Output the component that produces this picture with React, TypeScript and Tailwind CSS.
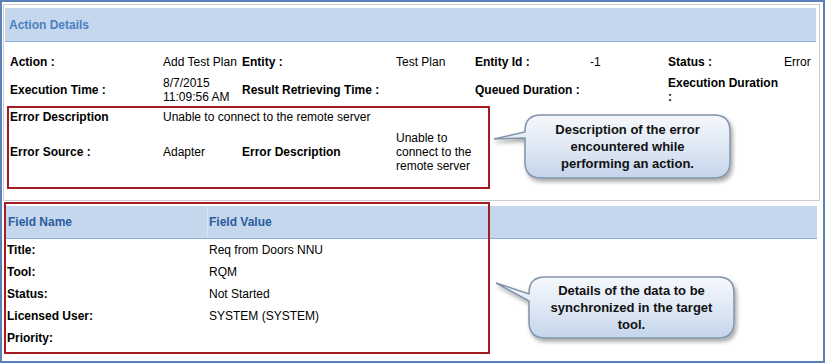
import React from 'react';

interface CalloutProps {
  left: number;
  top: number;
  width: number;
  height: number;
  bodyX: number;
  tipY: number;
  joinTop: number;
  joinBottom: number;
  lines: string[];
}

// speech bubble drawn as one svg path (body + tail), text laid over it
const Callout: React.FC<CalloutProps> = ({ left, top, width, height, bodyX, tipY, joinTop, joinBottom, lines }) => {
  const L = bodyX;
  const T = 5;
  const R = width - 8;
  const B = height - 8;
  const r = 16;
  const d = `M 4 ${tipY} L ${L} ${joinTop} L ${L} ${T + r} Q ${L} ${T} ${L + r} ${T} L ${R - r} ${T} Q ${R} ${T} ${R} ${T + r} L ${R} ${B - r} Q ${R} ${B} ${R - r} ${B} L ${L + r} ${B} Q ${L} ${B} ${L} ${B - r} L ${L} ${joinBottom} Z`;
  const id = `g${left}${top}`;
  return (
    <div className="absolute" style={{ left, top, width, height }}>
      <svg width={width} height={height} className="absolute left-0 top-0">
        <defs>
          <linearGradient id={id} x1="0" y1="0" x2="0" y2="1">
            <stop offset="0" stopColor="#f5f8fc" />
            <stop offset="0.55" stopColor="#dde7f4" />
            <stop offset="1" stopColor="#c3d4ea" />
          </linearGradient>
          <filter id={`${id}s`} x="-10%" y="-10%" width="130%" height="140%">
            <feDropShadow dx="2" dy="3" stdDeviation="2" floodColor="#000" floodOpacity="0.35" />
          </filter>
        </defs>
        <path d={d} fill={`url(#${id})`} stroke="#8394ab" strokeWidth="1.5" filter={`url(#${id}s)`} />
      </svg>
      <div
        className="absolute flex flex-col items-center justify-center text-center font-bold text-[13px] leading-[17px] text-[#111]"
        style={{ left: L, top: T, width: R - L, height: B - T }}
      >
        {lines.map(l => (
          <div key={l}>{l}</div>
        ))}
      </div>
    </div>
  );
};

const Label: React.FC<{ children: React.ReactNode }> = ({ children }) => (
  <div className="font-bold">{children}</div>
);

const App: React.FC = () => {
  const fields: [string, string][] = [
    ['Title:', 'Req from Doors NNU'],
    ['Tool:', 'RQM'],
    ['Status:', 'Not Started'],
    ['Licensed User:', 'SYSTEM (SYSTEM)'],
    ['Priority:', ''],
  ];

  return (
    <div
      className="relative w-[825px] h-[363px] overflow-hidden bg-white border-2 border-[#5a82b6] text-[12px] text-black"
      style={{ fontFamily: '"Liberation Sans", Arial, sans-serif' }}
    >
      {/* Action details panel */}
      <div className="mt-[2px] ml-[1px] w-[817px] h-[197px] border border-[#cdcdcd]">
        <div className="mt-[3px] ml-[1px] w-[811px] h-[34px] bg-[#c5d7ec] border-b border-[#8eaedb] flex items-center pl-[4px]">
          <span className="font-bold text-[#4d7fc4]">Action Details</span>
        </div>

        <div className="mt-[6px] pl-[6px] grid grid-cols-[153px_79px_154px_79px_115px_78px_116px_1fr] auto-rows-[28px] items-center leading-[14px]">
          <Label>Action :</Label>
          <div>Add Test Plan</div>
          <Label>Entity :</Label>
          <div>Test Plan</div>
          <Label>Entity Id :</Label>
          <div>-1</div>
          <Label>Status :</Label>
          <div>Error</div>

          <Label>Execution Time :</Label>
          <div>8/7/2015 11:09:56 AM</div>
          <Label>Result Retrieving Time :</Label>
          <div></div>
          <Label>Queued Duration :</Label>
          <div></div>
          <Label>Execution Duration :</Label>
          <div></div>
        </div>

        <div className="mt-[2px] ml-[3px] w-[483px] h-[83px] border-2 border-[#a51b22] pl-[1px] leading-[14px]">
          <div className="grid grid-cols-[153px_79px_154px_1fr] h-[18px] items-center">
            <Label>Error Description</Label>
            <div className="col-span-3">Unable to connect to the remote server</div>
          </div>
          <div className="mt-[5px] grid grid-cols-[153px_79px_154px_1fr] items-center">
            <Label>Error Source :</Label>
            <div>Adapter</div>
            <Label>Error Description</Label>
            <div className="w-[80px]">Unable to connect to the remote server</div>
          </div>
        </div>
      </div>

      {/* Field table */}
      <div className="mt-[5px] ml-[4px] w-[811px]">
        <div className="h-[33px] bg-[#c5d7ec] border-b border-[#8eaedb] flex font-bold text-[#2b5c9e]">
          <div className="w-[202px] pl-[2px] flex items-center border-r border-[#dbe5f2]">Field Name</div>
          <div className="pl-[1px] flex items-center">Field Value</div>
        </div>
        {fields.map(([name, value]) => (
          <div key={name} className="h-[22px] flex items-center">
            <div className="w-[203px] pl-[1px] font-bold">{name}</div>
            <div>{value}</div>
          </div>
        ))}
      </div>

      {/* annotation box over the table */}
      <div className="absolute left-[2px] top-[200px] w-[486px] h-[152px] border-2 border-[#a51b22]" />

      <Callout
        left={488}
        top={108}
        width={248}
        height={76}
        bodyX={35}
        tipY={29}
        joinTop={22}
        joinBottom={28}
        lines={['Description of the error', 'encountered while', 'performing an action.']}
      />
      <Callout
        left={490}
        top={270}
        width={250}
        height={74}
        bodyX={37}
        tipY={11}
        joinTop={22}
        joinBottom={29}
        lines={['Details of the data to be', 'synchronized in the target', 'tool.']}
      />
    </div>
  );
};

export default App;
